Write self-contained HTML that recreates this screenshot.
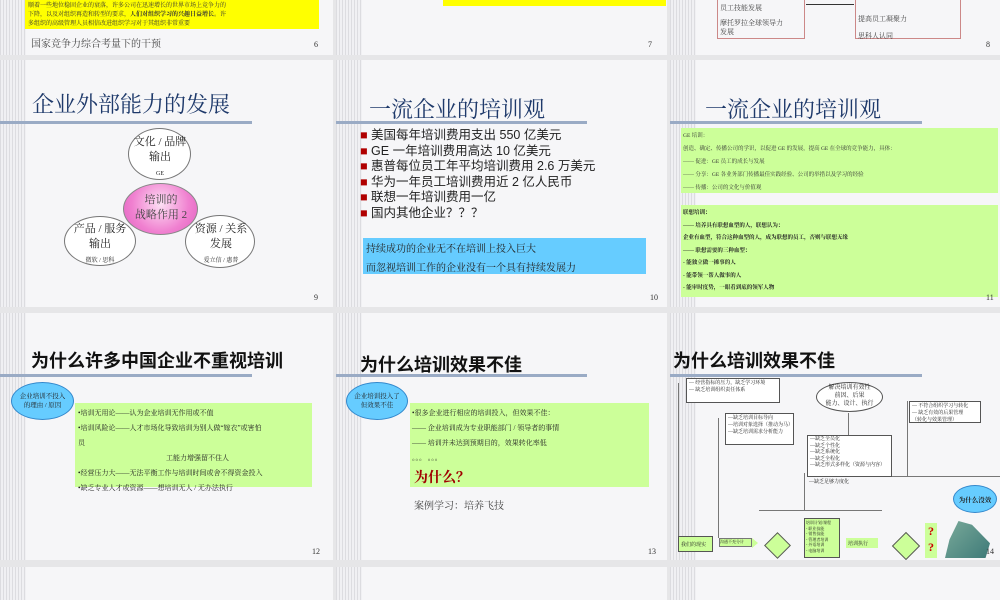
<!DOCTYPE html>
<html><head><meta charset="utf-8"><style>
*{margin:0;padding:0;box-sizing:border-box}
body{width:1000px;height:600px;overflow:hidden;background:#e6e6e8;position:relative;font-family:"Liberation Serif","Noto Serif CJK SC",serif;color:#222}
.s{position:absolute;background:#f6f6f8;overflow:hidden}
.s::before{content:"";position:absolute;left:0;top:0;bottom:0;width:26px;background:repeating-linear-gradient(90deg,#dcdce0 0 1px,#f0f0f3 1px 3px)}
.a{position:absolute;white-space:nowrap}
.ln{position:absolute;height:3px;background:#9aabc5;left:0}
.n{position:absolute;font-size:8px;color:#333}
.t1{font-size:22px;color:#1f3a6b}
.t2{font-size:18px;font-weight:bold;color:#111;font-family:"Liberation Sans","Noto Sans CJK SC",sans-serif}
.sm{font-size:6.5px}
.b{border:1px solid #555;background:#fff;position:absolute;font-size:5px;line-height:7px;padding:1px 2px;white-space:nowrap;overflow:hidden}
.v{position:absolute;width:1px;background:#777}
.h{position:absolute;height:1px;background:#777}
</style></head><body>
<!-- row 1 -->
<div class="s" style="left:0;top:0;width:333px;height:55px">
 <div class="a" style="left:25px;top:0;width:294px;height:29px;background:#ffff00"></div>
 <div class="a sm" style="left:28px;top:2px;line-height:9px;color:#333;font-size:6px">顺着一些地位稳固企业的衰落，许多公司在迅速增长的世界市场上竞争力的<br>下降，以及对组织再造和转型的要求，<b>人们对组织学习的兴趣日益增长</b>。许<br>多组织的高级管理人员相信改进组织学习对于其组织非常重要</div>
 <div class="a" style="left:31px;top:35px;font-size:10px;color:#444">国家竞争力综合考量下的干预</div>
 <div class="n" style="left:314px;top:40px">6</div>
</div>
<div class="s" style="left:336px;top:0;width:331px;height:55px">
 <div class="a" style="left:107px;top:0;width:223px;height:6px;background:#ffff00"></div>
 <div class="n" style="left:312px;top:40px">7</div>
</div>
<div class="s" style="left:670px;top:0;width:330px;height:55px">
 <div class="a" style="left:47px;top:-2px;width:88px;height:41px;border:1px solid #c88"></div>
 <div class="a" style="left:185px;top:-2px;width:106px;height:41px;border:1px solid #c88"></div>
 <div class="a" style="left:136px;top:4px;width:48px;height:1px;background:#333"></div>
 <div class="a" style="left:50px;top:3px;font-size:7px;color:#444">员工技能发展</div>
 <div class="a" style="left:50px;top:19px;font-size:7px;line-height:9px;color:#444">摩托罗拉全球领导力<br>发展</div>
 <div class="a" style="left:188px;top:11px;font-size:7px;line-height:17px;color:#444">提高员工凝聚力<br>思科人认同</div>
 <div class="n" style="left:316px;top:40px">8</div>
</div>
<!-- row 2 -->
<div class="s" style="left:0;top:60px;width:333px;height:247px">
 <div class="a t1" style="left:32px;top:28px">企业外部能力的发展</div>
 <div class="ln" style="top:61px;width:252px"></div>
 <div class="a" style="left:128px;top:68px;width:63px;height:52px;border:1px solid #777;border-radius:50%;background:#fff"></div>
 <div class="a" style="left:64px;top:156px;width:72px;height:50px;border:1px solid #777;border-radius:50%;background:#fff"></div>
 <div class="a" style="left:185px;top:155px;width:70px;height:53px;border:1px solid #777;border-radius:50%;background:#fff"></div>
 <div class="a" style="left:123px;top:123px;width:75px;height:52px;border:1px solid #888;border-radius:50%;background:radial-gradient(circle at 50% 40%,#fde0f4,#f080d0 60%,#e060c0)"></div>
 <div class="a" style="left:131px;top:75px;width:58px;text-align:center;font-size:11px;line-height:15px">文化 / 品牌<br>输出<br><span style="font-size:6px">GE</span></div>
 <div class="a" style="left:130px;top:133px;width:62px;text-align:center;font-size:11px;line-height:15px;color:#444">培训的<br>战略作用 2</div>
 <div class="a" style="left:66px;top:162px;width:68px;text-align:center;font-size:11px;line-height:15px">产品 / 服务<br>输出<br><span style="font-size:6px">微软 / 思科</span></div>
 <div class="a" style="left:187px;top:162px;width:68px;text-align:center;font-size:11px;line-height:15px">资源 / 关系<br>发展<br><span style="font-size:6px">爱立信 / 惠普</span></div>
 <div class="n" style="left:314px;top:233px">9</div>
</div>
<div class="s" style="left:336px;top:60px;width:331px;height:247px">
 <div class="a t1" style="left:33px;top:33px">一流企业的培训观</div>
 <div class="ln" style="top:61px;width:251px"></div>
 <div class="a" style="left:24px;top:68px;font-size:12.5px;line-height:15.5px;font-family:'Liberation Sans','Noto Sans CJK SC',sans-serif">
 <span style="color:#b00000">■</span> 美国每年培训费用支出 550 亿美元<br>
 <span style="color:#b00000">■</span> GE 一年培训费用高达 10 亿美元<br>
 <span style="color:#b00000">■</span> 惠普每位员工年平均培训费用 2.6 万美元<br>
 <span style="color:#b00000">■</span> 华为一年员工培训费用近 2 亿人民币<br>
 <span style="color:#b00000">■</span> 联想一年培训费用一亿<br>
 <span style="color:#b00000">■</span> 国内其他企业？？？</div>
 <div class="a" style="left:27px;top:178px;width:283px;height:36px;background:#66ccff"></div>
 <div class="a" style="left:30px;top:180px;font-size:10px;line-height:19px">持续成功的企业无不在培训上投入巨大<br>而忽视培训工作的企业没有一个具有持续发展力</div>
 <div class="n" style="left:314px;top:233px">10</div>
</div>
<div class="s" style="left:670px;top:60px;width:330px;height:247px">
 <div class="a t1" style="left:35px;top:33px">一流企业的培训观</div>
 <div class="ln" style="top:61px;width:252px"></div>
 <div class="a" style="left:11px;top:68px;width:317px;height:65px;background:#ccff99"></div>
 <div class="a" style="left:13px;top:70px;font-size:5.5px;line-height:13px;color:#333">GE 培训：<br>创造、确定、传播公司的学识，以促进 GE 的发展，提高 GE 在全球的竞争能力，具体：<br>—— 促进：GE 员工的成长与发展<br>—— 分享：GE 各业务部门传播最佳实践经验、公司的举措以及学习的经验<br>—— 传播：公司的文化与价值观</div>
 <div class="a" style="left:11px;top:145px;width:317px;height:92px;background:#ccff99"></div>
 <div class="a" style="left:13px;top:147px;font-size:5.5px;line-height:12.5px;font-weight:bold">联想培训：<br>—— 培养具有联想血型的人，联想认为：<br>企业有血型，符合这种血型的人，成为联想的员工，否则与联想无缘<br>—— 联想需要的三种血型：<br>- 能独立做一摊事的人<br>- 能带领一帮人做事的人<br>- 能审时度势，一眼看到底的领军人物</div>
 <div class="n" style="left:316px;top:233px">11</div>
</div>
<!-- row 3 -->
<div class="s" style="left:0;top:313px;width:333px;height:247px">
 <div class="a t2" style="left:31px;top:34px">为什么许多中国企业不重视培训</div>
 <div class="ln" style="top:61px;width:252px"></div>
 <div class="a" style="left:11px;top:69px;width:63px;height:38px;border-radius:50%;background:#66ccff;border:1px solid #3388cc"></div>
 <div class="a" style="left:11px;top:79px;width:63px;text-align:center;font-size:6.5px;line-height:9px">企业培训不投入<br>的理由 / 原因</div>
 <div class="a" style="left:75px;top:90px;width:237px;height:84px;background:#ccff99"></div>
 <div class="a" style="left:78px;top:93px;font-size:7px;line-height:15px">•培训无用论——认为企业培训无作用或不值<br>•培训风险论——人才市场化导致培训为别人做“嫁衣”或害怕<br>员<br><span style="padding-left:88px">工能力增强留不住人</span><br>•经营压力大——无法平衡工作与培训时间或舍不得资金投入<br>•缺乏专业人才或资源——想培训无人 / 无办法执行</div>
 <div class="n" style="left:312px;top:234px">12</div>
</div>
<div class="s" style="left:336px;top:313px;width:331px;height:247px">
 <div class="a t2" style="left:24px;top:38px">为什么培训效果不佳</div>
 <div class="ln" style="top:61px;width:251px"></div>
 <div class="a" style="left:10px;top:69px;width:62px;height:38px;border-radius:50%;background:#66ccff;border:1px solid #3388cc"></div>
 <div class="a" style="left:10px;top:79px;width:62px;text-align:center;font-size:6.5px;line-height:9px">企业培训投入了<br>但效果不佳</div>
 <div class="a" style="left:74px;top:90px;width:239px;height:84px;background:#ccff99"></div>
 <div class="a" style="left:76px;top:93px;font-size:7px;line-height:15px">•很多企业进行相应的培训投入，但效果不佳：<br>—— 企业培训成为专业职能部门 / 领导者的事情<br>—— 培训并未达到预期目的，效果转化率低<br>。。。 。。。</div>
 <div class="a" style="left:78px;top:154px;font-size:14px;font-weight:bold;color:#a00000">为什么？</div>
 <div class="a" style="left:78px;top:184px;font-size:10px;color:#444">案例学习：培养飞技</div>
 <div class="n" style="left:312px;top:234px">13</div>
</div>
<div class="s" style="left:670px;top:313px;width:330px;height:247px">
 <div class="a t2" style="left:3px;top:34px">为什么培训效果不佳</div>
 <div class="ln" style="top:61px;width:252px"></div>
 <div class="v" style="left:8px;top:70px;height:155px"></div>
 <div class="v" style="left:48px;top:105px;height:120px"></div>
 <div class="v" style="left:134px;top:160px;height:37px"></div>
 <div class="v" style="left:178px;top:100px;height:22px"></div>
 <div class="v" style="left:237px;top:88px;height:75px"></div>
 <div class="h" style="left:222px;top:163px;width:108px"></div>
 <div class="h" style="left:89px;top:197px;width:123px"></div>
 <div class="b" style="left:16px;top:65px;width:94px;height:25px">— 经营指标的压力，缺乏学习环境<br>— 缺乏培训组织责任体系</div>
 <div class="a" style="left:146px;top:69px;width:67px;height:30px;border:1px solid #555;border-radius:50%;background:#fff"></div>
 <div class="a" style="left:146px;top:71px;width:67px;text-align:center;font-size:6px;line-height:8px">解决培训有效性<br>前因、后果<br>能力、设计、执行</div>
 <div class="b" style="left:55px;top:100px;width:69px;height:32px">—缺乏培训目标导向<br>—培训对象选择（推动为马）<br>—缺乏培训需求分析能力</div>
 <div class="b" style="left:239px;top:88px;width:72px;height:22px">— 不符合组织学习与转化<br>— 缺乏有效的后果管理<br>（转化与效果管理）</div>
 <div class="b" style="left:137px;top:122px;width:85px;height:42px;line-height:6.5px">—缺乏全员化<br>—缺乏个性化<br>—缺乏系统化<br>—缺乏全程化<br>—缺乏形式多样化（资源与内容）</div>
 <div class="a" style="left:139px;top:165px;font-size:5px">—缺乏足够力度化</div>
 <div class="a" style="left:8px;top:223px;width:35px;height:16px;background:#ccff99;border:1px solid #555;font-size:5px;padding:4px 2px">我们的现实</div>
 <div class="a" style="left:49px;top:225px;width:33px;height:9px;background:#ccff99;border:1px solid #777;font-size:4px">沟通不充分计</div>
 <div class="a" style="left:82px;top:225px;width:0;height:0;border-left:6px solid #ccff99;border-top:5px solid transparent;border-bottom:5px solid transparent"></div>
 <div class="a" style="left:98px;top:223px;width:19px;height:19px;transform:rotate(45deg);background:#ccff99;border:1px solid #555"></div>
 <div class="a" style="left:134px;top:205px;width:36px;height:40px;background:#ccff99;border:1px solid #555;font-size:4px;line-height:5.5px;padding:1px">培训计划/课程<br>- 职业技能<br>- 销售技能<br>- 管理者培训<br>- 外语培训<br>- 电脑培训</div>
 <div class="a" style="left:176px;top:225px;width:32px;height:10px;background:#ccff99;font-size:5px;padding:2px">培训执行</div>
 <div class="a" style="left:226px;top:223px;width:20px;height:20px;transform:rotate(45deg);background:#ccff99;border:1px solid #555"></div>
 <div class="a" style="left:255px;top:210px;width:12px;height:35px;background:#ccff99;color:#c00;font-weight:bold;font-size:12px;line-height:16px;text-align:center">?<br>?</div>
 <div class="a" style="left:283px;top:172px;width:44px;height:28px;border-radius:50%;background:#66ccff;border:1px solid #3388cc;font-size:6.5px;font-weight:bold;padding-top:9px;text-align:center">为什么没效</div>
 <div class="a" style="left:275px;top:208px;width:45px;height:37px;background:linear-gradient(135deg,#7aaa9a,#3e7a78);clip-path:polygon(30% 0,60% 10%,100% 60%,90% 100%,0 100%,10% 50%)"></div>
 <div class="n" style="left:316px;top:234px">14</div>
</div>
<!-- row 4 -->
<div class="s" style="left:0;top:567px;width:333px;height:33px"></div>
<div class="s" style="left:336px;top:567px;width:331px;height:33px"></div>
<div class="s" style="left:670px;top:567px;width:330px;height:33px"></div>
</body></html>
